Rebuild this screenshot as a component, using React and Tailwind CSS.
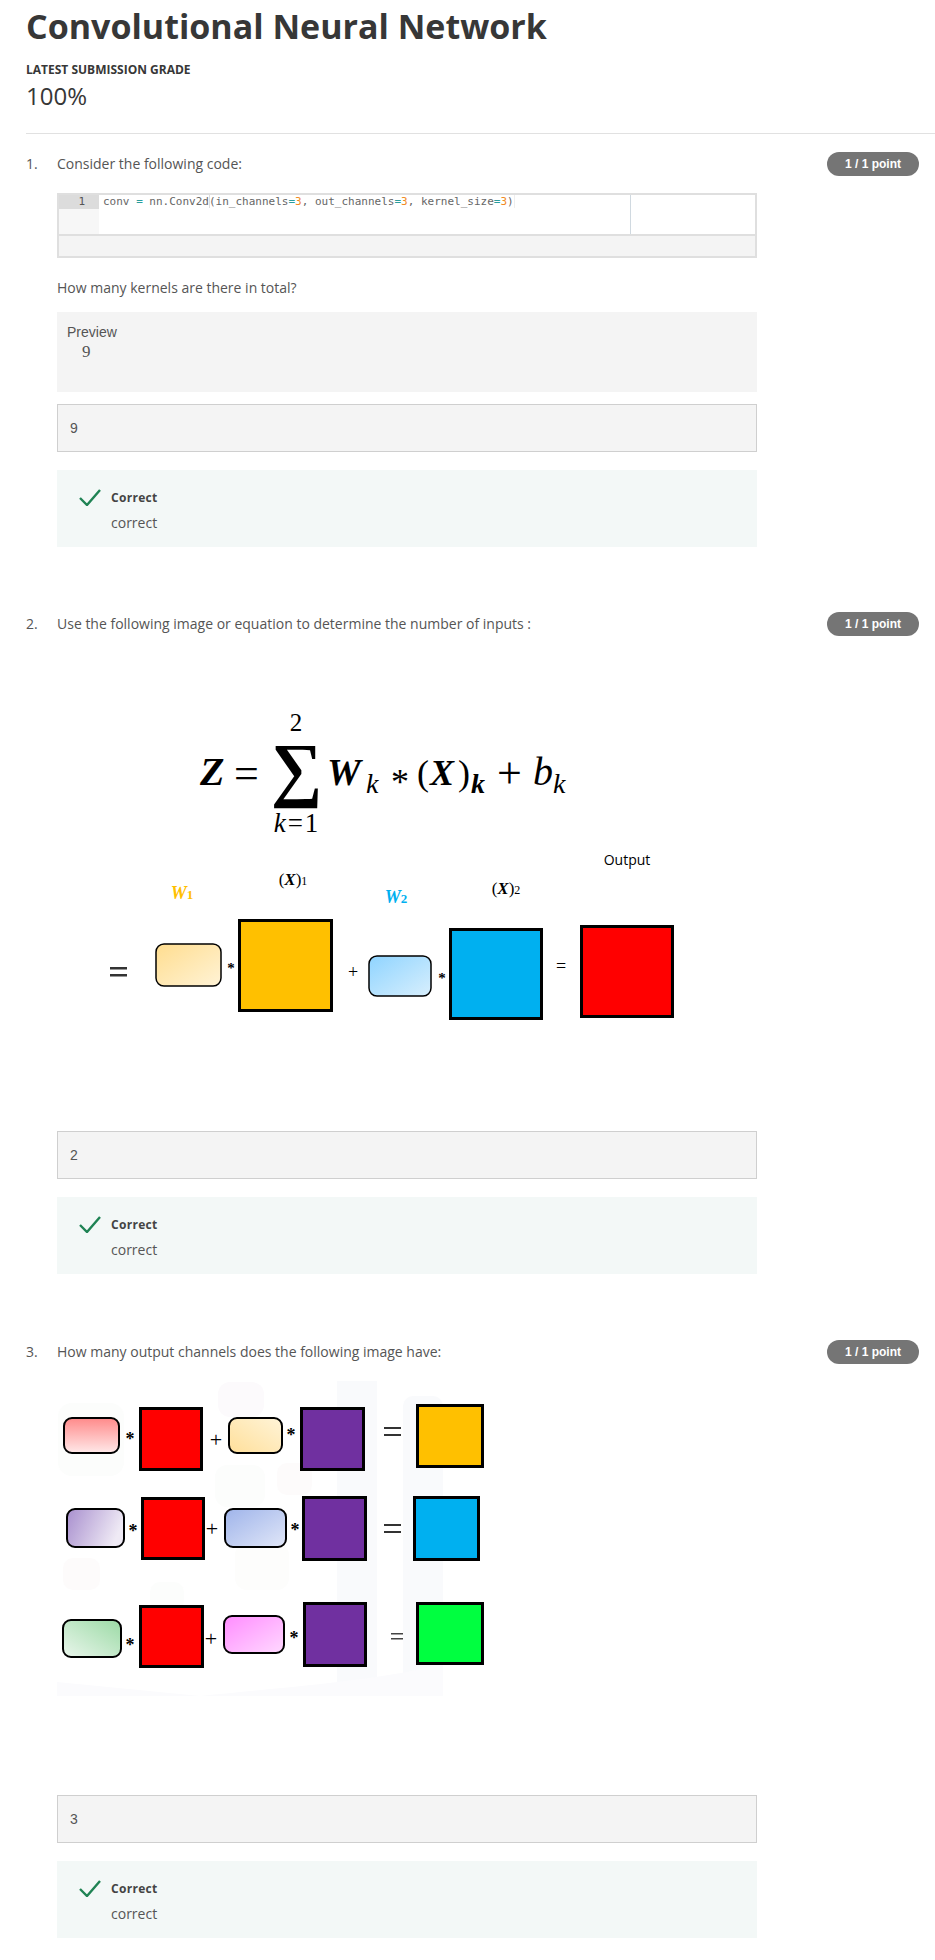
import React from 'react';

const sans = { fontFamily: '"Open Sans", sans-serif' };
const mathFont = '"Liberation Serif", serif';

function PointPill() {
  return (
    <div className="ml-auto mr-[16px] mt-[2px] flex h-[24px] w-[92px] shrink-0 items-center justify-center rounded-full bg-[#757575] font-['Liberation_Sans',sans-serif] text-[12px] font-bold text-white">
      1 / 1 point
    </div>
  );
}

function QuestionHead({ num, text }) {
  return (
    <div className="flex h-[22px] items-center text-[14px] text-[#555]">
      <div className="w-[31px] shrink-0">{num}.</div>
      <div>{text}</div>
      <PointPill />
    </div>
  );
}

function AnswerInput({ value, className }) {
  return (
    <div className={`flex h-[48px] w-[700px] items-center border border-[#cfcfcf] bg-[#f4f4f4] pl-[12px] font-['Liberation_Sans',sans-serif] text-[14px] text-[#555] ${className}`}>
      {value}
    </div>
  );
}

function Feedback() {
  return (
    <div className="mt-[18px] flex h-[77px] w-[700px] bg-[#f3f8f7] pl-[22px] pt-[18px]">
      <svg width="22" height="18" viewBox="0 0 22 18" className="shrink-0">
        <polyline points="1,10 8,17 21,2" fill="none" stroke="#1f8354" strokeWidth="2.4" />
      </svg>
      <div className="ml-[10px]">
        <div className="mt-[-1px] h-[22px] text-[12px] font-bold leading-[22px] tracking-[0.3px] text-[#444]">Correct</div>
        <div className="mt-[3px] text-[14px] leading-[22px] text-[#555]">correct</div>
      </div>
    </div>
  );
}

function CodeBox() {
  return (
    <div className="mt-[19px] w-[700px] border-2 border-[#dfdfdf] bg-[#f4f4f4]">
      <div className="flex h-[41px] border-b-2 border-[#dfdfdf] bg-white">
        <div className="w-[40px] shrink-0 bg-[#f7f7f7]">
          <div className="h-[14px] bg-[#dcdcdc] pr-[14px] text-right font-['DejaVu_Sans_Mono',monospace] text-[11px] leading-[14px] text-[#555]">1</div>
        </div>
        <div className="flex-1 pl-[4px] font-['DejaVu_Sans_Mono',monospace] text-[11px] leading-[14px] text-[#666]">
          <span>conv </span><span className="text-[#2a9d9d]">=</span><span> nn.Conv2d</span>
          <span className="shadow-[inset_1px_0_0_#ddd]">(</span>
          <span>in_channels</span><span className="text-[#2a9d9d]">=</span><span className="text-[#f08a24]">3</span>
          <span>, out_channels</span><span className="text-[#2a9d9d]">=</span><span className="text-[#f08a24]">3</span>
          <span>, kernel_size</span><span className="text-[#2a9d9d]">=</span><span className="text-[#f08a24]">3</span>
          <span className="shadow-[1px_0_0_#eee]">)</span>
        </div>
        <div className="w-[125px] shrink-0 border-l border-[#d0d9e0]" />
      </div>
      <div className="h-[20px]" />
    </div>
  );
}

function Rounded({ x1, y1, x2, y2, fill, sw = 1.5 }) {
  return <rect x={x1} y={y1} width={x2 - x1} height={y2 - y1} rx="8" fill={`url(#${fill})`} stroke="#000" strokeWidth={sw} />;
}

function Square({ x1, y1, x2, y2, fill, sw = 3 }) {
  return <rect x={x1 + sw / 2} y={y1 + sw / 2} width={x2 - x1 - sw} height={y2 - y1 - sw} fill={fill} stroke="#000" strokeWidth={sw} />;
}

function Grad({ id, from, to, x1 = 0, y1 = 0, x2 = 1, y2 = 1 }) {
  return (
    <linearGradient id={id} x1={x1} y1={y1} x2={x2} y2={y2}>
      <stop offset="0" stopColor={from} />
      <stop offset="1" stopColor={to} />
    </linearGradient>
  );
}

function Sym({ x, y, size = 16, children, family = mathFont, weight = 'normal', fillColor = '#000' }) {
  return (
    <text x={x} y={y} fontSize={size} textAnchor="middle" dominantBaseline="central" fontFamily={family} fontWeight={weight} fill={fillColor}>
      {children}
    </text>
  );
}

function MathText({ x, y, size, children, italic, bold, fillColor = '#000', anchor = 'start' }) {
  return (
    <text x={x} y={y} fontSize={size} textAnchor={anchor} fontFamily={mathFont} fontStyle={italic ? 'italic' : 'normal'} fontWeight={bold ? 'bold' : 'normal'} fill={fillColor}>
      {children}
    </text>
  );
}

// page coordinates are kept in the viewBox so numbers read straight off the screenshot
function EquationFigure() {
  return (
    <svg width="700" height="460" viewBox="57 660 700 460" className="mt-[26px] block">
      <defs>
        <Grad id="y1" from="#ffdd8f" to="#fff3d6" />
        <Grad id="b1" from="#8fd4ff" to="#d8effd" />
      </defs>
      <MathText x={200} y={785} size={40} italic bold>Z</MathText>
      <MathText x={234} y={788} size={44}>=</MathText>
      <MathText x={296} y={731} size={25} anchor="middle">2</MathText>
      <text x={271} y={793} fontSize={72} fontWeight="bold" fontFamily={mathFont}>∑</text>
      <MathText x={296} y={832} size={27} anchor="middle"><tspan fontStyle="italic">k</tspan><tspan dx="2">=</tspan><tspan dx="2">1</tspan></MathText>
      <MathText x={327} y={785} size={38} italic bold>W</MathText>
      <MathText x={366} y={793} size={28} italic>k</MathText>
      <MathText x={391} y={794} size={36}>*</MathText>
      <MathText x={417} y={785} size={36}>(</MathText>
      <MathText x={430} y={785} size={36} italic bold>X</MathText>
      <MathText x={458} y={785} size={36}>)</MathText>
      <MathText x={471} y={793} size={28} italic bold>k</MathText>
      <MathText x={497} y={788} size={44}>+</MathText>
      <MathText x={533} y={785} size={40} italic>b</MathText>
      <MathText x={553} y={793} size={28} italic>k</MathText>

      <text x={627} y={865} fontSize={14} textAnchor="middle" fontFamily='"Open Sans", sans-serif' fill="#000">Output</text>
      <MathText x={293} y={885} size={17} anchor="middle">(<tspan fontStyle="italic" fontWeight="bold">X</tspan>)<tspan fontSize="12">1</tspan></MathText>
      <MathText x={182} y={899} size={18} anchor="middle" italic bold fillColor="#ffc000">W<tspan fontSize="13" fontStyle="normal">1</tspan></MathText>
      <MathText x={396} y={903} size={18} anchor="middle" italic bold fillColor="#00b0f0">W<tspan fontSize="13" fontStyle="normal">2</tspan></MathText>
      <MathText x={506} y={894} size={17} anchor="middle">(<tspan fontStyle="italic" fontWeight="bold">X</tspan>)<tspan fontSize="12">2</tspan></MathText>

      <rect x="110" y="967" width="17" height="2.5" fill="#333" />
      <rect x="110" y="974" width="17" height="2.5" fill="#333" />
      <Rounded x1={156} y1={944} x2={221} y2={986} fill="y1" />
      <Sym x={231} y={968} size={15} weight="bold">*</Sym>
      <Square x1={238} y1={919} x2={333} y2={1012} fill="#ffc000" />
      <Sym x={353} y={972} size={18}>+</Sym>
      <Rounded x1={369} y1={956} x2={431} y2={996} fill="b1" />
      <Sym x={442} y={978} size={15} weight="bold">*</Sym>
      <Square x1={449} y1={928} x2={543} y2={1020} fill="#00b0f0" />
      <Sym x={561} y={966} size={18}>=</Sym>
      <Square x1={580} y1={925} x2={674} y2={1018} fill="#ff0000" />
    </svg>
  );
}

function ChannelsFigure() {
  return (
    <svg width="700" height="340" viewBox="57 1375 700 340" className="mt-[13px] block">
      <defs>
        <Grad id="r3" from="#ff8a8a" to="#ffe9e9" x2={0} />
        <Grad id="y3" from="#ffdf9a" to="#fff4d8" x1={0} y1={1} x2={1} y2={0} />
        <Grad id="p3" from="#a88fce" to="#efeaf5" y2={0.3} />
        <Grad id="bl3" from="#9fb4ea" to="#e1e7f8" />
        <Grad id="g3" from="#eaf6ec" to="#9bdaa5" x1={0} y1={1} x2={1} y2={0} />
        <Grad id="m3" from="#ff8cff" to="#ffd9ff" />
      </defs>

      {/* faint watermark behind the picture */}
      <g fill="#f9fafc">
        <rect x="337" y="1381" width="40" height="315" />
        <rect x="403" y="1396" width="40" height="300" rx="10" />
        <rect x="218" y="1382" width="46" height="35" rx="12" fill="#fcfafc" />
        <rect x="215" y="1465" width="50" height="42" rx="12" fill="#fcfdfc" />
        <rect x="277" y="1463" width="35" height="32" rx="10" fill="#fdfbfb" />
        <rect x="235" y="1543" width="54" height="47" rx="12" fill="#fdfdfc" />
        <rect x="63" y="1558" width="37" height="32" rx="10" fill="#fdfbfb" />
        <rect x="150" y="1582" width="34" height="28" rx="10" fill="#fcfdfc" />
        <rect x="58" y="1403" width="66" height="73" rx="14" fill="#fcfdfc" />
        <path d="M57 1682 L57 1696 L443 1696 L443 1664 C 380 1680 300 1686 200 1696 Z" fill="#fbfbfd" />
      </g>

      <Rounded x1={64} y1={1418} x2={119} y2={1453} fill="r3" sw={2} />
      <Sym x={130} y={1439} size={18} weight="bold">*</Sym>
      <Square x1={139} y1={1407} x2={203} y2={1471} fill="#ff0000" />
      <Sym x={216} y={1439} size={22}>+</Sym>
      <Rounded x1={229} y1={1418} x2={282} y2={1453} fill="y3" sw={2} />
      <Sym x={291} y={1435} size={18} weight="bold">*</Sym>
      <Square x1={300} y1={1407} x2={365} y2={1471} fill="#7030a0" />
      <rect x="384" y="1427" width="17" height="2" fill="#333" />
      <rect x="384" y="1434" width="17" height="2" fill="#333" />
      <Square x1={416} y1={1404} x2={484} y2={1468} fill="#ffc000" />

      <Rounded x1={67} y1={1509} x2={124} y2={1547} fill="p3" sw={2} />
      <Sym x={133} y={1531} size={18} weight="bold">*</Sym>
      <Square x1={141} y1={1497} x2={205} y2={1560} fill="#ff0000" />
      <Sym x={212} y={1528} size={22}>+</Sym>
      <Rounded x1={225} y1={1509} x2={286} y2={1547} fill="bl3" sw={2} />
      <Sym x={295} y={1530} size={18} weight="bold">*</Sym>
      <Square x1={302} y1={1496} x2={367} y2={1561} fill="#7030a0" />
      <rect x="384" y="1524" width="17" height="2" fill="#333" />
      <rect x="384" y="1531" width="17" height="2" fill="#333" />
      <Square x1={413} y1={1496} x2={480} y2={1561} fill="#00b0f0" />

      <Rounded x1={63} y1={1620} x2={121} y2={1657} fill="g3" sw={2} />
      <Sym x={130} y={1645} size={18} weight="bold">*</Sym>
      <Square x1={139} y1={1605} x2={204} y2={1668} fill="#ff0000" />
      <Sym x={211} y={1638} size={22}>+</Sym>
      <Rounded x1={224} y1={1616} x2={284} y2={1653} fill="m3" sw={2} />
      <Sym x={294} y={1638} size={18} weight="bold">*</Sym>
      <Square x1={303} y1={1602} x2={367} y2={1667} fill="#7030a0" />
      <rect x="391" y="1633" width="12" height="1.5" fill="#444" />
      <rect x="391" y="1638" width="12" height="1.5" fill="#444" />
      <Square x1={416} y1={1602} x2={484} y2={1665} fill="#00ff40" />
    </svg>
  );
}

export default function App() {
  return (
    <div className="h-[1960px] w-[935px] overflow-hidden bg-white pl-[26px] text-[#333]" style={sans}>
      <h1 className="pt-[3px] text-[34px] font-bold leading-[46px] text-[#373737]">Convolutional Neural Network</h1>
      <div className="mt-[12px] text-[12px] font-bold leading-[18px] text-[#373737]">LATEST SUBMISSION GRADE</div>
      <div className="mt-[2px] text-[24px] leading-[30px] text-[#373737]">100%</div>
      <div className="mt-[22px] h-px bg-[#e1e1e1]" />

      <div className="pt-[18px]">
        <QuestionHead num={1} text="Consider the following code:" />
        <div className="ml-[31px]">
          <CodeBox />
          <div className="mt-[19px] h-[22px] text-[14px] leading-[22px] text-[#555]">How many kernels are there in total?</div>
          <div className="mt-[13px] h-[80px] w-[700px] bg-[#f4f4f4] pl-[10px] pt-[10px] font-['Liberation_Sans',sans-serif] text-[14px] leading-[20px] text-[#555]">
            Preview
            <div className="pl-[15px] font-['Liberation_Serif',serif] text-[17px] leading-[19px]">9</div>
          </div>
          <AnswerInput value="9" className="mt-[12px]" />
          <Feedback />
        </div>
      </div>

      <div className="pt-[65px]">
        <QuestionHead num={2} text="Use the following image or equation to determine the number of inputs :" />
        <div className="ml-[31px]">
          <EquationFigure />
          <AnswerInput value="2" className="mt-[11px]" />
          <Feedback />
        </div>
      </div>

      <div className="pt-[66px]">
        <QuestionHead num={3} text="How many output channels does the following image have:" />
        <div className="ml-[31px]">
          <ChannelsFigure />
          <AnswerInput value="3" className="mt-[80px]" />
          <Feedback />
        </div>
      </div>
    </div>
  );
}
